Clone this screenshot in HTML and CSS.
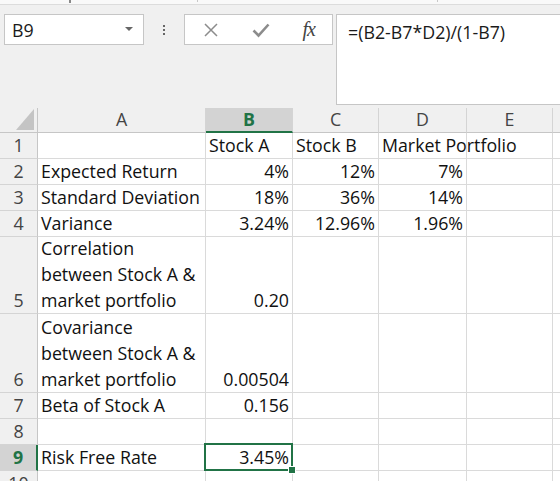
FILE: index.html
```html
<!DOCTYPE html>
<html lang="en">
<head>
    <meta charset="UTF-8">
    <title>Beta sheet</title>
    <link rel="stylesheet" href="styles.css">
</head>
<body>
    <div class="top-strip">
        <span class="tick tick-dark"></span>
        <span class="tick tick-1"></span>
        <span class="tick tick-2"></span>
    </div>

    <div class="formula-bar">
        <div class="name-box">
            <span>B9</span>
            <svg class="drop" width="8" height="5" viewBox="0 0 8 5"><path d="M0 0 L8 0 L4 4 Z" fill="#666"/></svg>
        </div>
        <div class="grip"><i></i><i></i><i></i></div>
        <div class="fx-buttons">
            <svg width="16" height="16" viewBox="0 0 16 16"><path d="M2 2 L14 14 M14 2 L2 14" stroke="#8c8c8c" stroke-width="1.5" fill="none"/></svg>
            <svg width="18" height="16" viewBox="0 0 18 16"><path d="M1.5 8.5 L6.5 13.5 L16.5 2.5" stroke="#8c8c8c" stroke-width="2.6" fill="none"/></svg>
            <span class="fx">fx</span>
        </div>
        <div class="formula">=(B2-B7*D2)/(1-B7)</div>
    </div>

    <div class="sheet">
        <div class="corner"><span class="tri"></span></div>
        <div class="col-head">A</div>
        <div class="col-head active">B</div>
        <div class="col-head">C</div>
        <div class="col-head">D</div>
        <div class="col-head">E</div>
        <div class="col-head last"></div>

        <div class="row-head">1</div>
        <div class="cell"></div>
        <div class="cell">Stock A</div>
        <div class="cell">Stock B</div>
        <div class="cell overflow">Market Portfolio</div>
        <div class="cell"></div>
        <div class="cell last"></div>

        <div class="row-head">2</div>
        <div class="cell">Expected Return</div>
        <div class="cell num">4%</div>
        <div class="cell num">12%</div>
        <div class="cell num">7%</div>
        <div class="cell"></div>
        <div class="cell last"></div>

        <div class="row-head">3</div>
        <div class="cell">Standard Deviation</div>
        <div class="cell num">18%</div>
        <div class="cell num">36%</div>
        <div class="cell num">14%</div>
        <div class="cell"></div>
        <div class="cell last"></div>

        <div class="row-head">4</div>
        <div class="cell">Variance</div>
        <div class="cell num">3.24%</div>
        <div class="cell num">12.96%</div>
        <div class="cell num">1.96%</div>
        <div class="cell"></div>
        <div class="cell last"></div>

        <div class="row-head">5</div>
        <div class="cell">Correlation<br>between Stock A &amp;<br>market portfolio</div>
        <div class="cell num">0.20</div>
        <div class="cell"></div>
        <div class="cell"></div>
        <div class="cell"></div>
        <div class="cell last"></div>

        <div class="row-head">6</div>
        <div class="cell">Covariance<br>between Stock A &amp;<br>market portfolio</div>
        <div class="cell num">0.00504</div>
        <div class="cell"></div>
        <div class="cell"></div>
        <div class="cell"></div>
        <div class="cell last"></div>

        <div class="row-head">7</div>
        <div class="cell">Beta of Stock A</div>
        <div class="cell num">0.156</div>
        <div class="cell"></div>
        <div class="cell"></div>
        <div class="cell"></div>
        <div class="cell last"></div>

        <div class="row-head">8</div>
        <div class="cell"></div>
        <div class="cell"></div>
        <div class="cell"></div>
        <div class="cell"></div>
        <div class="cell"></div>
        <div class="cell last"></div>

        <div class="row-head active">9</div>
        <div class="cell">Risk Free Rate</div>
        <div class="cell num selected">3.45%</div>
        <div class="cell"></div>
        <div class="cell"></div>
        <div class="cell"></div>
        <div class="cell last"></div>

        <div class="row-head">10</div>
        <div class="cell"></div>
        <div class="cell"></div>
        <div class="cell"></div>
        <div class="cell"></div>
        <div class="cell"></div>
        <div class="cell last"></div>
    </div>
</body>
</html>
```

FILE: styles.css
```css
body {
    margin: 0;
    width: 560px;
    height: 481px;
    overflow: hidden;
    background-color: #f0f0f0;
    font-family: "Open Sans", "Liberation Sans", sans-serif;
    font-size: 17.8px;
    color: #1a1a1a;
}

/* thin ribbon edge at the very top */
.top-strip {
    height: 4px;
    background-color: #f9f9f9;
    border-bottom: 1px solid #dcdcdc;
    display: flex;
}
.tick {
    width: 1px;
    height: 2px;
    background-color: #c8c8c8;
}
.tick-dark {
    width: 2px;
    height: 3px;
    margin-left: 69px;
    background-color: #888;
}
.tick-1 { margin-left: 126px; }
.tick-2 { margin-left: 239px; }

/* name box + formula */
.formula-bar {
    height: 103px;
    box-sizing: border-box;
    padding-top: 9px;
    display: flex;
    align-items: flex-start;
}
.name-box {
    margin-left: 4px;
    width: 140px;
    height: 31px;
    box-sizing: border-box;
    background-color: #fff;
    border: 1px solid #c6c6c6;
    display: flex;
    align-items: center;
    justify-content: space-between;
    padding: 0 10px 0 7px;
}
.grip {
    width: 40px;
    height: 31px;
    display: flex;
    flex-direction: column;
    align-items: center;
    justify-content: center;
    gap: 2px;
}
.grip i {
    width: 2px;
    height: 2px;
    background-color: #666;
}
.fx-buttons {
    width: 149px;
    height: 31px;
    box-sizing: border-box;
    background-color: #fff;
    border: 1px solid #c6c6c6;
    display: flex;
    align-items: center;
    justify-content: space-between;
    padding: 0 17px 0 18px;
}
.fx {
    font-family: "Liberation Serif", serif;
    font-style: italic;
    font-size: 20px;
    color: #444;
    letter-spacing: -1px;
}
.formula {
    margin-left: 3px;
    flex: 1;
    height: 91px;
    box-sizing: border-box;
    background-color: #fff;
    border: 1px solid #c6c6c6;
    border-right: none;
    padding: 5px 0 0 11px;
}

/* worksheet grid */
.sheet {
    display: grid;
    grid-template-columns: 38px 168px 87px 86px 88px 86px 1fr;
    grid-template-rows: 25px 26px 26px 26px 26px 77px 79px 26px 26px 26px 26px;
    background-color: #fff;
}
.corner {
    background-color: #f0f0f0;
    border-right: 1px solid #c6c6c6;
    border-bottom: 1px solid #c6c6c6;
    position: relative;
}
.tri {
    position: absolute;
    right: 3px;
    bottom: 2px;
    width: 0;
    height: 0;
    border-left: 18px solid transparent;
    border-bottom: 21px solid #c4c4c4;
}
.col-head {
    background-color: #f0f0f0;
    border-right: 1px solid #d4d4d4;
    border-bottom: 1px solid #c6c6c6;
    display: flex;
    align-items: center;
    justify-content: center;
    color: #444;
    line-height: 1;
}
.col-head.active {
    background-color: #d3d3d3;
    border-bottom: 2px solid #217346;
    color: #217346;
    font-weight: bold;
}
.row-head {
    background-color: #f0f0f0;
    border-right: 1px solid #c6c6c6;
    border-bottom: 1px solid #d4d4d4;
    display: flex;
    align-items: flex-end;
    justify-content: center;
    line-height: 26px;
    color: #444;
}
.row-head.active {
    background-color: #d3d3d3;
    border-right: 2px solid #217346;
    color: #217346;
    font-weight: bold;
}
.cell {
    border-right: 1px solid #dadada;
    border-bottom: 1px solid #dadada;
    display: flex;
    flex-direction: column;
    justify-content: flex-end;
    padding: 0 3px;
    line-height: 26px;
    white-space: nowrap;
    color: #111;
}
.cell.num {
    align-items: flex-end;
}
.cell.overflow {
    overflow: visible;
    position: relative;
    z-index: 1;
}
.last {
    border-right: none;
}
.cell.selected {
    position: relative;
}
.cell.selected::after {
    content: "";
    position: absolute;
    left: -2px;
    top: -2px;
    right: -1px;
    bottom: -1px;
    border: 2px solid #217346;
}
.cell.selected::before {
    content: "";
    position: absolute;
    right: -4px;
    bottom: -4px;
    width: 6px;
    height: 6px;
    background-color: #217346;
    border: 1px solid #fff;
    z-index: 2;
}
```
